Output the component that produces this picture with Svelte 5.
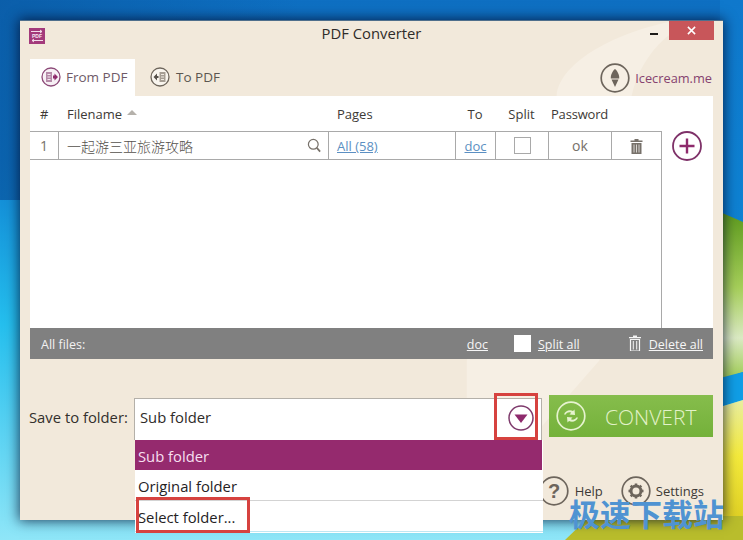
<script>
  const columns = [
    { label: '#', cls: 'c-num' },
    { label: 'Filename', cls: 'c-name', sort: true },
    { label: 'Pages', cls: 'c-pages' },
    { label: 'To', cls: 'c-to' },
    { label: 'Split', cls: 'c-split' },
    { label: 'Password', cls: 'c-pass' }
  ];
  const options = ['Sub folder', 'Original folder', 'Select folder...'];
</script>

<div class="desktop">
  <svg class="wallpaper" viewBox="0 0 743 540" preserveAspectRatio="none" aria-hidden="true">
    <defs>
      <linearGradient id="sky" x1="0" y1="0" x2="0" y2="1">
        <stop offset="0" stop-color="#0e6fc2" />
        <stop offset="0.3" stop-color="#0f82d2" />
        <stop offset="0.6" stop-color="#25bfee" />
        <stop offset="1" stop-color="#8fe6f8" />
      </linearGradient>
      <linearGradient id="topleft" x1="0" y1="0" x2="1" y2="0">
        <stop offset="0" stop-color="#0a5aa4" stop-opacity="0.8" />
        <stop offset="1" stop-color="#0a5aa4" stop-opacity="0" />
      </linearGradient>
      <linearGradient id="skyR" x1="0" y1="0" x2="0" y2="1">
        <stop offset="0" stop-color="#0f78cc" />
        <stop offset="1" stop-color="#0d8ad8" />
      </linearGradient>
      <linearGradient id="leaf" x1="0" y1="0" x2="0" y2="1">
        <stop offset="0" stop-color="#5d9a1e" />
        <stop offset="0.45" stop-color="#a6cf5a" />
        <stop offset="0.75" stop-color="#dbeac4" />
        <stop offset="1" stop-color="#9ecb50" />
      </linearGradient>
      <linearGradient id="sun" x1="0" y1="0" x2="0" y2="1">
        <stop offset="0" stop-color="#e9eea0" />
        <stop offset="0.4" stop-color="#f4ea3c" />
        <stop offset="1" stop-color="#d9c81c" />
      </linearGradient>
    </defs>
    <rect width="743" height="540" fill="url(#sky)" />
    <rect width="300" height="200" fill="url(#topleft)" />
    <rect x="720" width="23" height="400" fill="url(#skyR)" />
    <path d="M720 212 L743 222 V372 L720 380 Z" fill="url(#leaf)" />
    <path d="M720 378 L743 372 V400 L720 407 Z" fill="#109ee6" />
    <path d="M720 407 L743 400 V540 H720 Z" fill="url(#sun)" />
    <path d="M565 540 L590 516 H743 V540 Z" fill="#b9bd2c" />
  </svg>

  <main class="window">
    <svg class="swirl" viewBox="0 0 703 500" aria-hidden="true">
      <path d="M655 0 H672 C630 20 610 60 610 96 L580 340 L510 420 H447 V340 C470 250 537 170 537 75 C540 40 600 10 655 0 Z" fill="#f6efe4" />
    </svg>

    <header class="titlebar">
      <span class="app-icon">
        <svg viewBox="0 0 16 16" width="16" height="16" aria-hidden="true">
          <rect width="16" height="16" fill="#a33a7b" />
          <path d="M2 3.500h11M11 2l2 1.500-2 1.500M14 12.500H3M5 11l-2 1.500 2 1.500" stroke="#f3dcea" fill="none" stroke-width="1" />
          <text x="8" y="10" text-anchor="middle" class="pdf-mark">PDF</text>
        </svg>
      </span>
      <h1>PDF Converter</h1>
      <div class="controls">
        <span class="minimize"></span>
        <span class="close">
          <svg viewBox="0 0 10 10" width="9" height="9" aria-hidden="true"><path d="M1 1l8 8M9 1l-8 8" stroke="#fff" stroke-width="1.700" /></svg>
        </span>
      </div>
    </header>

    <div class="tabbar">
      <div class="tab active">
        <svg class="tab-icon" viewBox="0 0 20 20" aria-hidden="true">
          <circle cx="10" cy="10" r="9" fill="#f7f0f5" stroke="#8c4a78" stroke-width="1.300" />
          <path d="M5 5h6v10H5z" fill="#b58aa8" />
          <path d="M6.500 7.500h3M6.500 10h3M6.500 12.500h3" stroke="#f4e8f0" stroke-width="1" />
          <path d="M12 8.500h1.500V6.500L17 10l-3.500 3.500v-2H12z" fill="#8e2a6c" />
        </svg>
        <span>From PDF</span>
      </div>
      <div class="tab second">
        <svg class="tab-icon" viewBox="0 0 20 20" aria-hidden="true">
          <circle cx="10" cy="10" r="9" fill="#f9f5ee" stroke="#6e665c" stroke-width="1.300" />
          <path d="M9.500 5h6v10h-6z" fill="#a69e94" />
          <path d="M11 7.500h3M11 10h3M11 12.500h3" stroke="#efeae2" stroke-width="1" />
          <path d="M3.500 10L7 6.500V9h1.500v2H7v2.500z" fill="#55504a" />
        </svg>
        <span>To PDF</span>
      </div>
      <a class="brand" href="#top">
        <svg viewBox="0 0 30 30" width="30" height="30" aria-hidden="true">
          <circle cx="15" cy="15" r="13.800" fill="none" stroke="#6d655c" stroke-width="1.700" />
          <path d="M15 6c-2.500 2-4.500 6-4.200 9.500h8.400C19.500 12 17.500 8 15 6z" fill="#6d655c" />
          <path d="M11.500 16.500h7L15 24z" fill="#6d655c" />
        </svg>
        <span>Icecream.me</span>
      </a>
    </div>

    <section class="panel">
      <div class="content">
        <div class="list">
          <div class="row head">
            {#each columns as col}
              <span class={col.cls}>
                {col.label}
                {#if col.sort}<i class="sort"></i>{/if}
              </span>
            {/each}
          </div>
          <div class="row file">
            <span class="c-num muted">1</span>
            <span class="c-name name">
              <span>一起游三亚旅游攻略</span>
              <svg viewBox="0 0 16 16" width="15" height="15" aria-hidden="true">
                <circle cx="6.700" cy="6.700" r="5.200" fill="none" stroke="#77716a" stroke-width="1.300" />
                <path d="M10.500 10.500l3.500 4" stroke="#77716a" stroke-width="1.800" />
              </svg>
            </span>
            <span class="c-pages"><a href="#top">All (58)</a></span>
            <span class="c-to"><a href="#top">doc</a></span>
            <span class="c-split"><i class="check"></i></span>
            <span class="c-pass muted">ok</span>
            <span class="c-del">
              <svg class="trash" viewBox="0 0 12 16" width="13" height="16" aria-hidden="true">
                <path d="M4 1h4v1.500h4V4H0V2.500h4z" fill="#77716a" />
                <path d="M1 5h10v11H1z" fill="#77716a" />
                <path d="M3.500 6.500v8M6 6.500v8M8.500 6.500v8" stroke="#d8d5d1" stroke-width="1" />
              </svg>
            </span>
          </div>
          <div class="blank"></div>
        </div>
        <div class="add">
          <svg viewBox="0 0 30 30" width="30" height="30" aria-hidden="true">
            <circle cx="15" cy="15" r="14" fill="#fff" stroke="#7e3168" stroke-width="1.800" />
            <path d="M15 7.500v15M7.500 15h15" stroke="#8e2a6c" stroke-width="2.400" />
          </svg>
        </div>
      </div>
      <footer class="allbar">
        <span class="all-label">All files:</span>
        <a class="all-doc" href="#top">doc</a>
        <span class="all-split"><i class="check-white"></i><a href="#top">Split all</a></span>
        <span class="all-del">
          <svg viewBox="0 0 12 16" width="12" height="16" aria-hidden="true">
            <path d="M4 .500h4V2h4v1.300H0V2h4z" fill="#f4f4f4" />
            <path d="M1.500 4.500h9V16h-9z" fill="none" stroke="#f4f4f4" stroke-width="1.200" />
            <path d="M4.300 6v8.500M7.700 6v8.500" stroke="#f4f4f4" stroke-width="1" />
          </svg>
          <a href="#top">Delete all</a>
        </span>
      </footer>
    </section>

    <div class="savebar">
      <label for="folder">Save to folder:</label>
      <div class="combo" id="folder">
        <span>Sub folder</span>
        <svg viewBox="0 0 26 26" width="26" height="26" aria-hidden="true">
          <circle cx="13" cy="13" r="12" fill="#fff" stroke="#7e3a6c" stroke-width="1.500" />
          <path d="M6.500 9.500h13L13 18z" fill="#8e2a6c" />
        </svg>
        <div class="mark mark-arrow"></div>
      </div>
      <button class="convert">
        <svg viewBox="0 0 30 30" width="30" height="30" aria-hidden="true">
          <circle cx="15" cy="15" r="13.800" fill="none" stroke="#e6f3cf" stroke-width="1.700" />
          <path d="M8 13.500c1-3.500 5.500-5.500 9-3.500l1.500-1.500.5 5.500-5.500-.5 1.700-1.700c-2-1-4.500-.3-5.500 1.700z" fill="#e6f3cf" />
          <path d="M22 16.500c-1 3.500-5.500 5.500-9 3.500l-1.500 1.500-.5-5.500 5.500.5-1.700 1.700c2 1 4.500.3 5.500-1.700z" fill="#e6f3cf" />
        </svg>
        <span>CONVERT</span>
      </button>
    </div>

    <div class="bottom">
      <span class="bottom-item">
        <svg viewBox="0 0 30 30" width="30" height="30" aria-hidden="true">
          <circle cx="15" cy="15" r="13.800" fill="none" stroke="#6d655c" stroke-width="1.700" />
          <text x="15" y="22" text-anchor="middle" class="q">?</text>
        </svg>
        Help
      </span>
      <span class="bottom-item">
        <svg viewBox="0 0 30 30" width="30" height="30" aria-hidden="true">
          <circle cx="15" cy="15" r="13.800" fill="none" stroke="#6d655c" stroke-width="1.700" />
          <circle cx="15" cy="15" r="5" fill="none" stroke="#6d655c" stroke-width="3" />
          <path d="M15 7.500v3M15 19.500v3M7.500 15h3M19.500 15h3M9.700 9.700l2 2M18.300 18.300l2 2M20.300 9.700l-2 2M11.700 18.300l-2 2" stroke="#6d655c" stroke-width="2.500" />
        </svg>
        Settings
      </span>
    </div>

    <ul class="dropdown">
      {#each options as option, i}
        <li class:selected={i === 0}>{option}</li>
      {/each}
      <div class="mark mark-select"></div>
    </ul>
  </main>

  <div class="watermark">极速下载站</div>
</div>

<style>
  :global(body) {
    margin: 0;
    background: #0f78cc;
  }

  .desktop {
    position: relative;
    width: 743px;
    height: 540px;
    overflow: hidden;
    padding: 20px 0 0 20px;
    box-sizing: border-box;
    font-family: "Open Sans", "Noto Sans", "Noto Sans CJK SC", sans-serif;
    color: #3d3a36;
  }

  .wallpaper {
    position: absolute;
    inset: 0;
    width: 100%;
    height: 100%;
  }

  .window {
    position: relative;
    width: 703px;
    height: 500px;
    box-sizing: border-box;
    background: #f2e9db;
    border-top: 1px solid #4f6f8c;
    box-shadow: 0 0 12px 1px rgba(0, 10, 40, 0.75);
    padding: 0 10px;
  }

  .swirl {
    position: absolute;
    inset: 0;
    width: 100%;
    height: 100%;
  }

  .titlebar {
    position: relative;
    height: 38px;
    display: flex;
    justify-content: center;
    padding-top: 1px;
    box-sizing: border-box;
  }

  .titlebar h1 {
    margin: 0;
    font-size: 14.800px;
    font-weight: 400;
    line-height: 22px;
    color: #2f2c29;
  }

  .app-icon {
    position: absolute;
    left: -1px;
    top: 6px;
    height: 16px;
  }

  .pdf-mark {
    font-family: "Liberation Sans", sans-serif;
    font-size: 5px;
    font-weight: 700;
    fill: #f8e9f3;
  }

  .controls {
    position: absolute;
    right: -1px;
    top: 0;
    display: flex;
    align-items: flex-start;
  }

  .minimize {
    width: 8px;
    height: 2px;
    background: #1d1b19;
    margin: 12px 11px 0 0;
  }

  .close {
    width: 45px;
    height: 19px;
    background: #c8565a;
    display: flex;
    align-items: center;
    justify-content: center;
  }

  .tabbar {
    position: relative;
    height: 37px;
    display: flex;
    align-items: stretch;
  }

  .tab {
    width: 105px;
    display: flex;
    align-items: center;
    gap: 5px;
    padding: 0 0 1px 11px;
    box-sizing: border-box;
    font-size: 13.500px;
    color: #5c5650;
  }

  .tab.second {
    padding-left: 15px;
    gap: 6px;
  }

  .tab.active {
    background: #fff;
    color: #6f5a68;
  }

  .tab-icon {
    width: 20px;
    height: 20px;
    flex: none;
  }

  .brand {
    margin-left: auto;
    display: flex;
    align-items: center;
    gap: 5px;
    padding: 1px 1px 1px 0;
    color: #86426f;
    font-size: 12.800px;
    text-decoration: none;
  }

  .panel {
    position: relative;
    background: #fff;
    width: 683px;
  }

  .content {
    display: flex;
    height: 232px;
  }

  .list {
    width: 631px;
    display: flex;
    flex-direction: column;
    border-right: 1px solid #a9a9a9;
  }

  .row {
    display: flex;
    font-size: 13px;
  }

  .row > span {
    box-sizing: border-box;
    display: flex;
    align-items: center;
  }

  .head {
    height: 35px;
    color: #3d3a36;
    margin-right: -1px;
    background: #fff;
    position: relative;
  }

  .head > span {
    padding-top: 1px;
  }

  .file {
    height: 29px;
    border-top: 1px solid #a9a9a9;
    border-bottom: 1px solid #a9a9a9;
    box-sizing: border-box;
  }

  .file > span + span {
    border-left: 1px solid #a9a9a9;
  }

  .c-num { width: 28px; padding-left: 10px; }
  .c-name { width: 270px; padding-left: 8px; padding-right: 6px; }
  .c-pages { width: 127px; padding-left: 8px; }
  .c-to { width: 40px; justify-content: center; }
  .c-split { width: 53px; justify-content: center; }
  .c-pass { width: 63px; justify-content: center; }
  .c-del { flex: 1; justify-content: center; }

  .head .c-name { padding-left: 9px; }
  .head .c-pages { padding-left: 9px; }
  .head .c-pass {
    width: 75px;
    justify-content: flex-start;
    padding-left: 3px;
    letter-spacing: -0.2px;
  }

  .name {
    justify-content: space-between;
    font-size: 14px;
    color: #55514c;
    font-weight: 300;
  }

  .muted {
    color: #77716a;
    font-size: 14px;
  }

  .sort {
    display: inline-block;
    margin-left: 5px;
    margin-bottom: 4px;
    border: 4px solid transparent;
    border-top: 0;
    border-bottom: 5px solid #b5b1ab;
    border-left-width: 5px;
    border-right-width: 5px;
  }

  .file a {
    color: #5b8fc2;
    padding-top: 1px;
  }

  .check {
    width: 17px;
    height: 17px;
    border: 1px solid #a9a9a9;
    box-sizing: border-box;
    display: block;
  }

  .trash {
    display: block;
  }

  .blank {
    flex: 1;
  }

  .add {
    flex: 1;
    display: flex;
    justify-content: center;
    padding: 35px 0 0 0;
    box-sizing: border-box;
  }

  .add svg {
    margin-right: 1px;
  }

  .allbar {
    height: 31px;
    background: #808080;
    display: flex;
    align-items: center;
    color: #f2f2f2;
    font-size: 12.500px;
    padding: 1px 10px 0 11px;
    box-sizing: border-box;
  }

  .allbar a {
    color: #f6f6f6;
  }

  .all-doc {
    margin-left: auto;
  }

  .all-split {
    display: flex;
    align-items: center;
    gap: 7px;
    margin-left: 26px;
  }

  .check-white {
    width: 17px;
    height: 17px;
    background: #fff;
    display: block;
    margin-top: -1px;
  }

  .all-del {
    display: flex;
    align-items: center;
    gap: 8px;
    margin-left: 49px;
  }

  .all-del svg {
    margin-top: -3px;
  }

  .savebar {
    position: relative;
    margin-top: 36px;
    height: 44px;
    display: flex;
    align-items: flex-start;
  }

  .savebar label {
    width: 105px;
    font-size: 14.800px;
    line-height: 44px;
    margin-left: -1px;
    color: #33302c;
  }

  .combo {
    position: relative;
    width: 408px;
    height: 42px;
    margin-top: 3px;
    background: #fff;
    border: 1px solid #b4b0a9;
    border-bottom: 0;
    box-sizing: border-box;
    display: flex;
    align-items: center;
    justify-content: space-between;
    padding: 0 7px 0 5px;
    font-size: 14.800px;
    color: #2e2b28;
  }

  .combo > span {
    padding-bottom: 5px;
  }

  .combo > svg {
    margin-top: -3px;
  }

  .convert {
    width: 164px;
    height: 42px;
    margin-left: 7px;
    border: 0;
    padding: 0 0 0 7px;
    background: linear-gradient(#86bd4c, #74b13a);
    display: flex;
    align-items: center;
    gap: 19px;
    font-family: inherit;
    font-size: 21px;
    color: #e3f2c9;
    font-weight: 300;
  }

  .convert span {
    padding-top: 2px;
  }

  .mark {
    position: absolute;
    border: 3px solid #d6423f;
    box-sizing: border-box;
  }

  .mark-arrow {
    left: 359px;
    top: -6px;
    width: 44px;
    height: 47px;
  }

  .mark-select {
    left: 1px;
    top: 57px;
    width: 114px;
    height: 36px;
  }

  .bottom {
    position: absolute;
    right: 19px;
    top: 455px;
    display: flex;
    align-items: center;
    gap: 15px;
    font-size: 13px;
    color: #3d3a36;
  }

  .bottom-item {
    display: flex;
    align-items: center;
    gap: 5px;
  }

  .bottom-item:first-child {
    margin-right: 3px;
    gap: 6px;
  }

  .q {
    font-family: "Liberation Sans", sans-serif;
    font-size: 20px;
    font-weight: 700;
    fill: #6d655c;
  }

  .dropdown {
    position: absolute;
    left: 115px;
    top: 419px;
    width: 408px;
    margin: 0;
    padding: 0;
    list-style: none;
    background: #fff;
    font-size: 14.800px;
    color: #25221f;
    height: 93px;
  }

  .dropdown li {
    height: 31px;
    line-height: 31px;
    padding: 1px 0 0 3px;
    box-sizing: border-box;
    border-bottom: 1px solid #d3d3d3;
  }

  .dropdown li.selected {
    background: #952a6e;
    color: #f7dff0;
    height: 30px;
    line-height: 30px;
    border-bottom: 0;
    margin-right: 1px;
  }

  .dropdown li:last-of-type {
    border-bottom: 1px solid #bfe6f2;
  }

  .watermark {
    position: absolute;
    left: 569px;
    top: 491px;
    font-family: "Noto Sans CJK SC", sans-serif;
    font-size: 31px;
    font-weight: 700;
    line-height: 44px;
    color: #4f93d2;
    white-space: nowrap;
  }
</style>
